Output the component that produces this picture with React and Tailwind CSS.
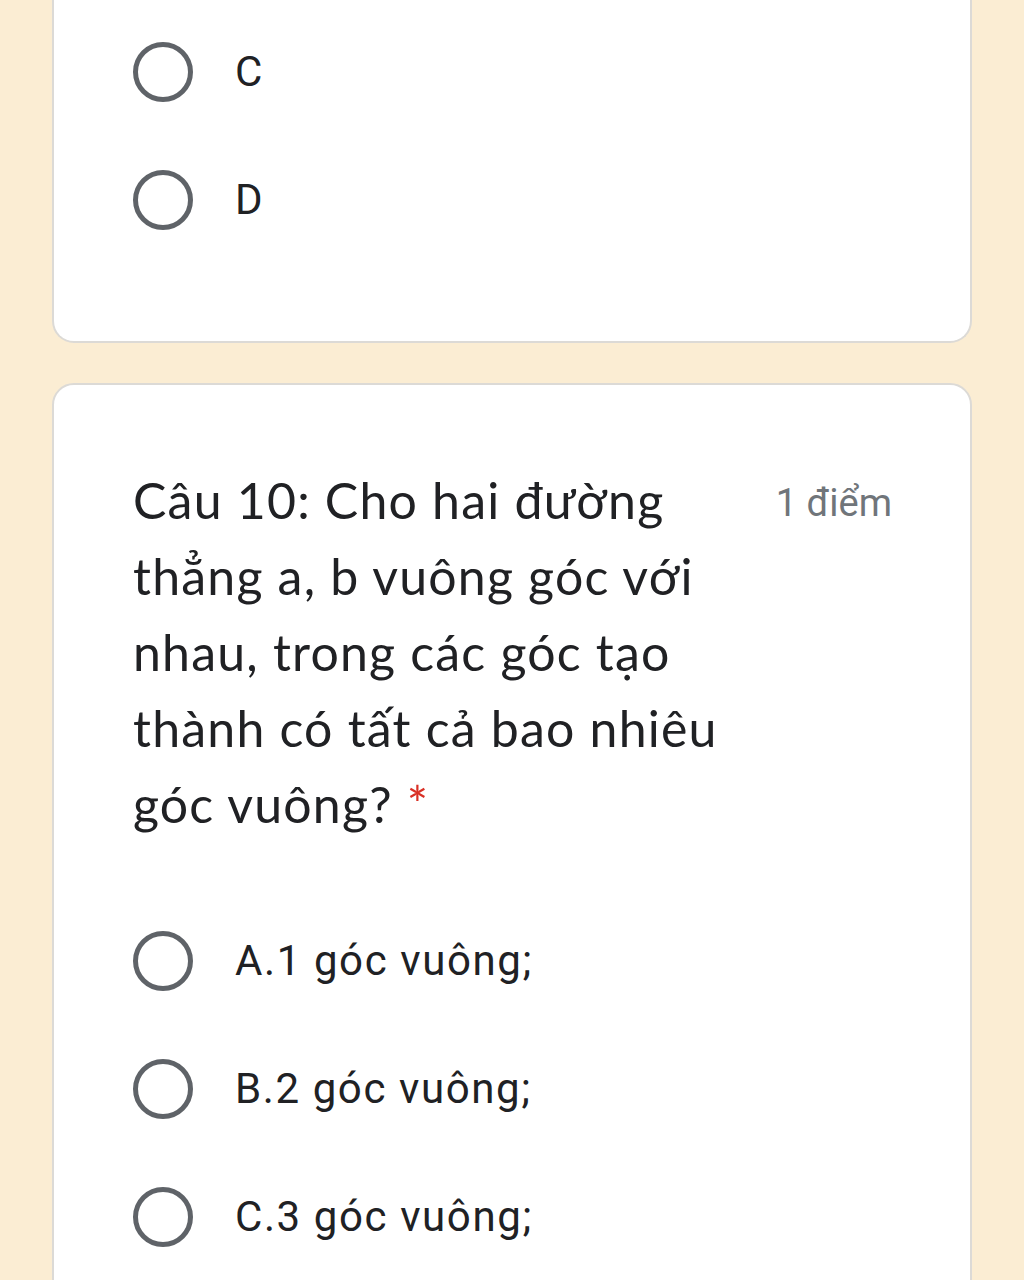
import React from "react";

const Radio = ({ label }) => {
  return (
    <div className="flex items-center h-[128px]">
      <div className="w-[60px] h-[60px] rounded-full border-[5px] border-[#5f6368] shrink-0" />
      <span className="ml-[42px] text-[42px] tracking-[1.6px] text-[#202124] font-['Roboto',sans-serif] leading-none">
        {label}
      </span>
    </div>
  );
};

const App = () => {
  return (
    <div className="w-full min-h-[1280px] bg-[#fbedd3] px-[52px] pb-10 overflow-hidden">
      <div className="bg-white border-x-2 border-b-2 border-[#dcdad6] rounded-b-[22px] pl-[79px] pt-[8px] pb-[77px]">
        <Radio label="C" />
        <Radio label="D" />
      </div>

      <div className="mt-[40px] bg-white border-2 border-[#dcdad6] rounded-[22px] pl-[79px] pr-[78px] pt-[77px] pb-10">
        <div className="flex items-start justify-between">
          <h2 className="text-[50px] leading-[76px] tracking-[1.2px] text-[#202124] font-['Lato',sans-serif]">
            Câu 10: Cho hai đường
            <br />
            thẳng a, b vuông góc với
            <br />
            nhau, trong các góc tạo
            <br />
            thành có tất cả bao nhiêu
            <br />
            góc vuông? <span className="text-[#d93025]">*</span>
          </h2>
          <span className="mt-[22px] text-[38px] text-[#70757a] font-['Roboto',sans-serif] leading-none">
            1 điểm
          </span>
        </div>
        <div className="mt-[55px]">
          <Radio label="A.1 góc vuông;" />
          <Radio label="B.2 góc vuông;" />
          <Radio label="C.3 góc vuông;" />
        </div>
      </div>
    </div>
  );
};

export default App;
